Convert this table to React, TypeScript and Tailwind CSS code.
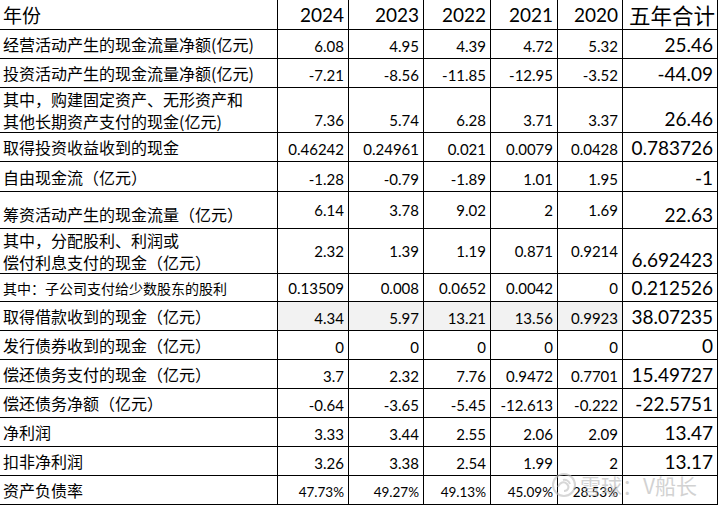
import React from 'react'

type Row = {
  label: string[]
  v: string[]
  t: string
  h: string
  mid?: boolean
  bg?: boolean
  small?: boolean
  pct?: boolean
}

const rows: Row[] = [
  { label: ['经营活动产生的现金流量净额(亿元)'], v: ['6.08', '4.95', '4.39', '4.72', '5.32'], t: '25.46', h: 'h-[29px]' },
  { label: ['投资活动产生的现金流量净额(亿元)'], v: ['-7.21', '-8.56', '-11.85', '-12.95', '-3.52'], t: '-44.09', h: 'h-[29px]' },
  { label: ['其中，购建固定资产、无形资产和', '其他长期资产支付的现金(亿元)'], v: ['7.36', '5.74', '6.28', '3.71', '3.37'], t: '26.46', h: 'h-[45px]' },
  { label: ['取得投资收益收到的现金'], v: ['0.46242', '0.24961', '0.021', '0.0079', '0.0428'], t: '0.783726', h: 'h-[29px]' },
  { label: ['自由现金流（亿元）'], v: ['-1.28', '-0.79', '-1.89', '1.01', '1.95'], t: '-1', h: 'h-[30px]' },
  { label: ['筹资活动产生的现金流量（亿元）'], v: ['6.14', '3.78', '9.02', '2', '1.69'], t: '22.63', h: 'h-[37px]', mid: true },
  { label: ['其中，分配股利、利润或', '偿付利息支付的现金（亿元）'], v: ['2.32', '1.39', '1.19', '0.871', '0.9214'], t: '6.692423', h: 'h-[45px]', mid: true },
  { label: ['其中：子公司支付给少数股东的股利'], v: ['0.13509', '0.008', '0.0652', '0.0042', '0'], t: '0.212526', h: 'h-[28px]', mid: true, small: true },
  { label: ['取得借款收到的现金（亿元）'], v: ['4.34', '5.97', '13.21', '13.56', '0.9923'], t: '38.07235', h: 'h-[29px]', bg: true },
  { label: ['发行债券收到的现金（亿元）'], v: ['0', '0', '0', '0', '0'], t: '0', h: 'h-[29px]' },
  { label: ['偿还债务支付的现金（亿元）'], v: ['3.7', '2.32', '7.76', '0.9472', '0.7701'], t: '15.49727', h: 'h-[29px]' },
  { label: ['偿还债务净额（亿元）'], v: ['-0.64', '-3.65', '-5.45', '-12.613', '-0.222'], t: '-22.5751', h: 'h-[29px]' },
  { label: ['净利润'], v: ['3.33', '3.44', '2.55', '2.06', '2.09'], t: '13.47', h: 'h-[29px]' },
  { label: ['扣非净利润'], v: ['3.26', '3.38', '2.54', '1.99', '2'], t: '13.17', h: 'h-[29px]' },
  { label: ['资产负债率'], v: ['47.73%', '49.27%', '49.13%', '45.09%', '28.53%'], t: '', h: 'h-[29px]', pct: true },
]

const years = ['2024', '2023', '2022', '2021', '2020']
const yearW = ['w-[71px]', 'w-[75px]', 'w-[67px]', 'w-[67px]', 'w-[65px]']

const cjk = "font-['Noto_Sans_CJK_SC',sans-serif]"
const num = "font-['Lato','Noto_Sans_CJK_SC',sans-serif]"

export default function App() {
  return (
    <div className="relative w-[718px] h-[505px] overflow-hidden bg-white text-black">
      {/* header */}
      <div className="flex h-[30px] border-b border-black">
        <div className={`w-[278px] shrink-0 flex items-end border-r border-black pl-[3px] pb-[2px] text-[19px] leading-[24px] ${cjk}`}>
          年份
        </div>
        {years.map((y, i) => (
          <div key={y} className={`${yearW[i]} shrink-0 flex items-end justify-end border-r border-black pr-[4px] pb-[3px] text-[19px] leading-[22px] ${num}`}>
            {y}
          </div>
        ))}
        <div className={`w-[95px] shrink-0 flex items-end justify-end border-r border-black pr-[2px] pb-[1px] text-[21.5px] leading-[26px] whitespace-nowrap ${cjk}`}>
          五年合计
        </div>
      </div>

      {rows.map((r, ri) => (
        <div key={ri} className={`flex ${r.h} border-b border-black`}>
          <div
            className={`w-[278px] shrink-0 flex flex-col justify-end border-r border-black pl-[3px] ${cjk} ${
              r.small ? 'text-[14px] leading-[20px] pb-[3px]' : r.label.length > 1 ? 'text-[16px] leading-[22px]' : 'text-[16px] leading-[21px] pb-[3px]'
            }`}
          >
            {r.label.map((l) => (
              <div key={l} className="whitespace-nowrap">{l}</div>
            ))}
          </div>
          {r.v.map((v, i) => (
            <div
              key={i}
              className={`${yearW[i]} shrink-0 flex justify-end border-r border-black pr-[4px] ${num} ${r.mid ? 'items-center' : 'items-end pb-[3px]'} ${r.pct ? 'text-[13.5px] leading-[17px]' : 'text-[15px] leading-[18px]'} ${r.bg ? 'bg-[#f2f2f2]' : ''}`}
            >
              {v}
            </div>
          ))}
          <div className={`w-[95px] shrink-0 flex items-end justify-end border-r border-black pr-[4px] pb-[2px] text-[19px] leading-[23px] ${num}`}>
            {r.t}
          </div>
        </div>
      ))}

      {/* watermark */}
      <div className="absolute left-[551px] top-[472px] flex items-center gap-[3px] opacity-60 pointer-events-none">
        <svg width="26" height="26" viewBox="0 0 26 26" fill="none" stroke="#bdbdbd" strokeWidth="2">
          <circle cx="13" cy="13" r="11" />
          <path d="M7 15c2-5 6-6 9-3s1 7-3 7" />
          <path d="M12 8c3-1 6 1 7 4" />
        </svg>
        <span className={`text-[21px] leading-[26px] text-[#b5b5b5] ${cjk}`}>雪球：V船长</span>
      </div>
    </div>
  )
}
